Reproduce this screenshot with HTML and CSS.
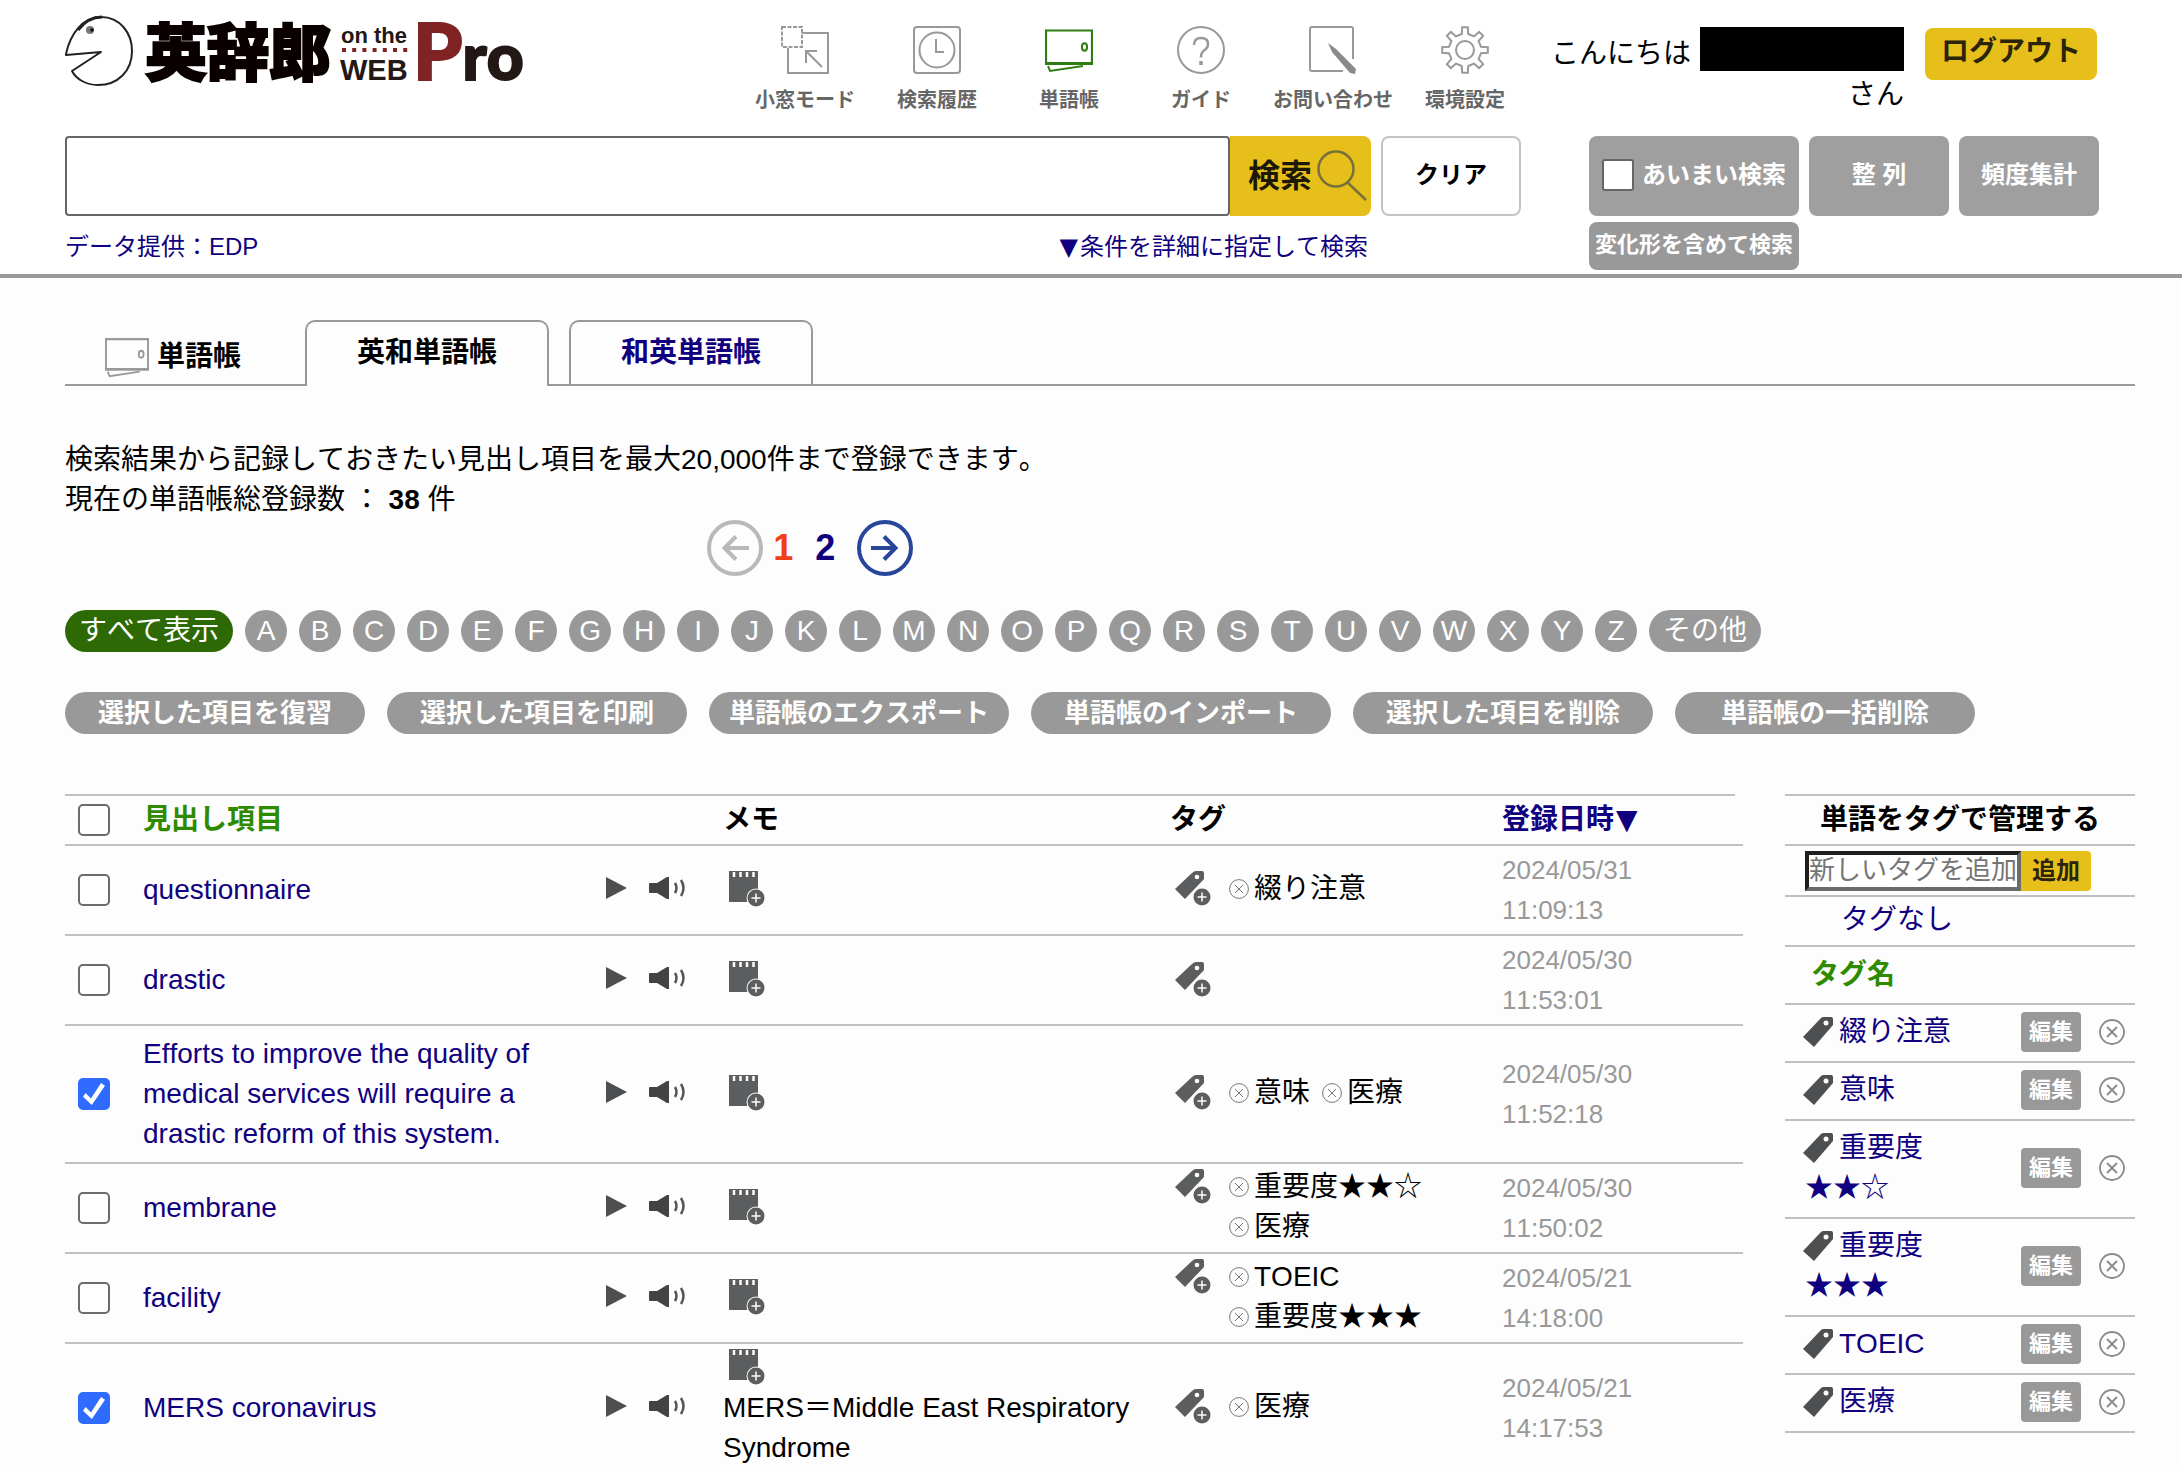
FILE: index.html
```html
<!DOCTYPE html>
<html lang="ja">
<head>
<meta charset="utf-8">
<title>単語帳 - 英辞郎 on the WEB Pro</title>
<link rel="stylesheet" href="styles.css">
</head>
<body>
<svg class="sprite" aria-hidden="true">
  <symbol id="i-play" viewBox="0 0 21 22"><path d="M0 0 21 11 0 22Z" fill="#4d4f50"/></symbol>
  <symbol id="i-sound" viewBox="0 0 36 22">
    <path d="M0 7q0-1 1-1h7L18 0h2v22h-2L8 16H1q-1 0-1-1Z" fill="#434343"/>
    <path d="M26 6q3 5 0 10M32 3q5 8 0 16" fill="none" stroke="#555" stroke-width="2.500"/>
  </symbol>
  <symbol id="i-memo" viewBox="0 0 36 36">
    <path d="M0 0h29v31H0Z" fill="#5b5d5e"/>
    <path d="M5 1v5M11.500 1v5M18 1v5M24.500 1v5" stroke="#fdfdfd" stroke-width="2.500"/>
    <circle cx="27" cy="27" r="9.500" fill="#fdfdfd"/><circle cx="27" cy="27" r="8.500" fill="#5b5d5e"/>
    <path d="M22.500 27h9M27 22.500v9" stroke="#fdfdfd" stroke-width="1.500"/>
  </symbol>
  <symbol id="i-tagadd" viewBox="0 0 36 36">
    <path d="M0 18 17 2q2-2 4-2h6q2 0 2 2v6L10 28Z" fill="#5b5d5e"/>
    <circle cx="22" cy="6" r="2.300" fill="#fdfdfd"/>
    <circle cx="27" cy="26" r="10" fill="#fdfdfd"/><circle cx="27" cy="26" r="8.500" fill="#5b5d5e"/>
    <path d="M22.500 26h9M27 21.500v9" stroke="#fdfdfd" stroke-width="1.500"/>
  </symbol>
  <symbol id="i-tag" viewBox="0 0 30 30">
    <path d="M0 20 18 1q1-1 3-1h7q2 0 2 2v6L11 30Z" fill="#4d4f50"/><circle cx="23" cy="6" r="2.500" fill="#fdfdfd"/>
  </symbol>
  <symbol id="i-x" viewBox="0 0 20 20">
    <circle cx="10" cy="10" r="9.400" fill="none" stroke="#777" stroke-width="1"/>
    <path d="m6 6 8 8M14 6l-8 8" stroke="#777" stroke-width="1"/>
  </symbol>
  <symbol id="i-del" viewBox="0 0 26 26">
    <circle cx="13" cy="13" r="12" fill="none" stroke="#8a8a8a" stroke-width="1.800"/>
    <path d="m8 8 10 10M18 8 8 18" stroke="#8a8a8a" stroke-width="1.800"/>
  </symbol>
  <symbol id="i-wallet" viewBox="0 0 48 48">
    <path d="M1 4.500h46V37H1Z" fill="none" stroke="currentColor" stroke-width="2.200"/>
    <path d="M0 37.500h48" stroke="currentColor" stroke-width="3"/>
    <ellipse cx="39.500" cy="21" rx="2.600" ry="3.800" fill="none" stroke="currentColor" stroke-width="2"/>
    <path d="m3 40 2 5 33-5" fill="none" stroke="currentColor" stroke-width="2"/>
  </symbol>
</svg>

<header class="site-header">
  <div class="header-top">
    <a class="logo" href="#" aria-label="英辞郎 on the WEB Pro">
      <svg width="480" height="106" viewBox="0 -15 480 106">
        <path d="M1 39C5 20 17 2 36 2c19 0 31 16 31 34 0 20-14 34-34 34C21 70 11 64 7 56L36 37 1 40Z" fill="#fff" stroke="#222" stroke-width="2" stroke-linejoin="round"/>
        <path d="M13 15Q23 2 37 2" fill="none" stroke="#222" stroke-width="3"/>
        <circle cx="25" cy="15" r="4" fill="#777"/><circle cx="27" cy="15" r="1.800" fill="#111"/>
        <text class="logo-kanji" x="80" y="61">英辞郎</text>
        <text class="logo-small" x="276" y="28">on the</text>
        <path d="M277 35h66" stroke="#802423" stroke-width="4" stroke-dasharray="4 6.200"/>
        <text class="logo-web" x="275" y="65">WEB</text>
        <text class="logo-p" x="348" y="65">P<tspan class="logo-ro">ro</tspan></text>
      </svg>
    </a>
    <nav class="tools-nav">
      <a href="#"><svg width="48" height="48" viewBox="0 0 48 48" fill="none" stroke="#999" stroke-width="2"><path d="M1 1h20v20H1Z" stroke-dasharray="4 1.500"/><path d="M21 7h26v40H7V22M41 41 25 25M25 37V25h11"/></svg>小窓モード</a>
      <a href="#"><svg width="48" height="48" viewBox="0 0 48 48" fill="none" stroke="#999" stroke-width="2"><rect x="1" y="1" width="46" height="46" rx="3"/><circle cx="24" cy="24" r="17.500"/><path d="M23 13v13h8"/></svg>検索履歴</a>
      <a href="#"><svg class="green" width="48" height="48"><use href="#i-wallet"/></svg>単語帳</a>
      <a href="#"><svg width="48" height="48" viewBox="0 0 48 48" fill="none" stroke="#999" stroke-width="2"><circle cx="24" cy="24" r="23"/><path d="M17 19q0-7 7-7t7 6q0 4-4 6.500-3 2-3 7" stroke-width="2.500"/><path d="M24 35v4" stroke-width="3.500"/></svg>ガイド</a>
      <a href="#"><svg width="48" height="48" viewBox="0 0 48 48" fill="none" stroke="#999" stroke-width="2"><path d="M44 33V3q0-2-2-2H3Q1 1 1 3v40q0 2 2 2h31"/><path d="m19 17 8 6 20 20-1 5-5-1-18-21Z" fill="#8a8a8a" stroke="none"/></svg>お問い合わせ</a>
      <a href="#"><svg width="48" height="48" viewBox="-24 -24 48 48" fill="none" stroke="#999" stroke-width="2"><path d="M-3.200-16-2.800-22.800H2.800L3.200-16 9-13.600 14.100-18.100 18.100-14.100 13.600-9 16-3.200 22.800-2.800V2.800L16 3.200 13.600 9 18.100 14.100 14.100 18.100 9 13.600 3.200 16 2.800 22.800H-2.800L-3.200 16-9 13.600-14.100 18.100-18.100 14.100-13.600 9-16 3.200-22.800 2.800V-2.800L-16-3.200-13.600-9-18.100-14.100-14.100-18.100-9-13.600Z"/><circle r="9"/></svg>環境設定</a>
    </nav>
    <div class="greeting">
      <div class="greeting-line"><span>こんにちは</span><span class="masked-name"></span></div>
      <div>さん</div>
    </div>
    <button class="logout" type="button">ログアウト</button>
  </div>
  <div class="header-search">
    <div class="search-main">
      <form class="search-form">
        <input class="search-input" type="text" aria-label="検索語">
        <button class="search-button" type="button">検索<svg width="52" height="54" viewBox="0 0 52 54" fill="none" stroke="#77703a" stroke-width="2.500"><circle cx="20" cy="20" r="17.500"/><path d="m31 33 19 18"/></svg></button>
      </form>
      <div class="search-links">
        <a href="#">データ提供：EDP</a>
        <a href="#"><span class="tri">▼</span>条件を詳細に指定して検索</a>
      </div>
    </div>
    <button class="clear-button" type="button">クリア</button>
    <div class="search-tools">
      <label class="tool fuzzy"><input type="checkbox" class="fuzzy-check">あいまい検索</label>
      <button class="tool" type="button">整 列</button>
      <button class="tool" type="button">頻度集計</button>
      <button class="tool inflect" type="button">変化形を含めて検索</button>
    </div>
  </div>
</header>

<main class="page">
  <div class="tabs">
    <h1 class="tabs-title"><svg width="44" height="44"><use href="#i-wallet"/></svg>単語帳</h1>
    <a class="tab active" href="#">英和単語帳</a>
    <a class="tab" href="#">和英単語帳</a>
  </div>

  <div class="intro">
    <p>検索結果から記録しておきたい見出し項目を最大20,000件まで登録できます。</p>
    <p>現在の単語帳総登録数 ： <b>38</b> 件</p>
  </div>

  <nav class="pager">
    <svg width="56" height="56" viewBox="0 0 56 56" fill="none" stroke="#b9b9b9" stroke-width="4"><circle cx="28" cy="28" r="26"/><path d="M42 28H18M29 16.500 17.500 28 29 39.500"/></svg>
    <span class="current">1</span>
    <a href="#">2</a>
    <a class="next" href="#" aria-label="次へ"><svg width="56" height="56" viewBox="0 0 56 56" fill="none" stroke="#27459a" stroke-width="4"><circle cx="28" cy="28" r="26"/><path d="M14 28h24M27 16.500 38.500 28 27 39.500"/></svg></a>
  </nav>

  <nav class="letters">
    <a class="wide active" href="#">すべて表示</a>
    <a href="#">A</a><a href="#">B</a><a href="#">C</a><a href="#">D</a><a href="#">E</a><a href="#">F</a><a href="#">G</a><a href="#">H</a><a href="#">I</a><a href="#">J</a><a href="#">K</a><a href="#">L</a><a href="#">M</a><a href="#">N</a><a href="#">O</a><a href="#">P</a><a href="#">Q</a><a href="#">R</a><a href="#">S</a><a href="#">T</a><a href="#">U</a><a href="#">V</a><a href="#">W</a><a href="#">X</a><a href="#">Y</a><a href="#">Z</a>
    <a class="wide" href="#">その他</a>
  </nav>

  <div class="actions">
    <button type="button">選択した項目を復習</button>
    <button type="button">選択した項目を印刷</button>
    <button type="button">単語帳のエクスポート</button>
    <button type="button">単語帳のインポート</button>
    <button type="button">選択した項目を削除</button>
    <button type="button">単語帳の一括削除</button>
  </div>

  <div class="columns">
    <section class="words">
      <table class="word-table">
        <colgroup><col class="c-check"><col class="c-word"><col class="c-audio"><col><col class="c-tags"><col class="c-date"></colgroup>
        <thead>
          <tr>
            <th><input class="check" type="checkbox" aria-label="すべて選択"></th>
            <th class="green-text" colspan="2">見出し項目</th>
            <th>メモ</th>
            <th>タグ</th>
            <th><a href="#">登録日時<span class="tri">▼</span></a></th>
          </tr>
        </thead>
        <tbody>
          <tr>
            <td><input class="check" type="checkbox" aria-label="questionnaire"></td>
            <td class="word"><a href="#">questionnaire</a></td>
            <td><div class="audio"><svg width="21" height="22"><use href="#i-play"/></svg><svg width="36" height="22"><use href="#i-sound"/></svg></div></td>
            <td class="memo"><div class="memo-icon"><svg width="36" height="36"><use href="#i-memo"/></svg></div></td>
            <td class="tags"><div class="tag-cell"><svg width="36" height="36"><use href="#i-tagadd"/></svg><div class="tag-list"><span><svg width="20" height="20"><use href="#i-x"/></svg>綴り注意</span></div></div></td>
            <td class="date">2024/05/31<br>11:09:13</td>
          </tr>
          <tr>
            <td><input class="check" type="checkbox" aria-label="drastic"></td>
            <td class="word"><a href="#">drastic</a></td>
            <td><div class="audio"><svg width="21" height="22"><use href="#i-play"/></svg><svg width="36" height="22"><use href="#i-sound"/></svg></div></td>
            <td class="memo"><div class="memo-icon"><svg width="36" height="36"><use href="#i-memo"/></svg></div></td>
            <td class="tags"><div class="tag-cell"><svg width="36" height="36"><use href="#i-tagadd"/></svg></div></td>
            <td class="date">2024/05/30<br>11:53:01</td>
          </tr>
          <tr>
            <td><input class="check" type="checkbox" checked aria-label="Efforts to improve the quality of medical services"></td>
            <td class="word"><a href="#">Efforts to improve the quality of medical services will require a drastic reform of this system.</a></td>
            <td><div class="audio"><svg width="21" height="22"><use href="#i-play"/></svg><svg width="36" height="22"><use href="#i-sound"/></svg></div></td>
            <td class="memo"><div class="memo-icon"><svg width="36" height="36"><use href="#i-memo"/></svg></div></td>
            <td class="tags"><div class="tag-cell"><svg width="36" height="36"><use href="#i-tagadd"/></svg><div class="tag-list"><span><svg width="20" height="20"><use href="#i-x"/></svg>意味</span><span><svg width="20" height="20"><use href="#i-x"/></svg>医療</span></div></div></td>
            <td class="date">2024/05/30<br>11:52:18</td>
          </tr>
          <tr>
            <td><input class="check" type="checkbox" aria-label="membrane"></td>
            <td class="word"><a href="#">membrane</a></td>
            <td><div class="audio"><svg width="21" height="22"><use href="#i-play"/></svg><svg width="36" height="22"><use href="#i-sound"/></svg></div></td>
            <td class="memo"><div class="memo-icon"><svg width="36" height="36"><use href="#i-memo"/></svg></div></td>
            <td class="tags"><div class="tag-cell"><svg width="36" height="36"><use href="#i-tagadd"/></svg><div class="tag-list"><span><svg width="20" height="20"><use href="#i-x"/></svg>重要度★★☆</span><span><svg width="20" height="20"><use href="#i-x"/></svg>医療</span></div></div></td>
            <td class="date">2024/05/30<br>11:50:02</td>
          </tr>
          <tr>
            <td><input class="check" type="checkbox" aria-label="facility"></td>
            <td class="word"><a href="#">facility</a></td>
            <td><div class="audio"><svg width="21" height="22"><use href="#i-play"/></svg><svg width="36" height="22"><use href="#i-sound"/></svg></div></td>
            <td class="memo"><div class="memo-icon"><svg width="36" height="36"><use href="#i-memo"/></svg></div></td>
            <td class="tags"><div class="tag-cell"><svg width="36" height="36"><use href="#i-tagadd"/></svg><div class="tag-list"><span><svg width="20" height="20"><use href="#i-x"/></svg>TOEIC</span><span><svg width="20" height="20"><use href="#i-x"/></svg>重要度★★★</span></div></div></td>
            <td class="date">2024/05/21<br>14:18:00</td>
          </tr>
          <tr>
            <td><input class="check" type="checkbox" checked aria-label="MERS coronavirus"></td>
            <td class="word"><a href="#">MERS coronavirus</a></td>
            <td><div class="audio"><svg width="21" height="22"><use href="#i-play"/></svg><svg width="36" height="22"><use href="#i-sound"/></svg></div></td>
            <td class="memo"><div class="memo-icon"><svg width="36" height="36"><use href="#i-memo"/></svg></div>MERS＝Middle East Respiratory Syndrome</td>
            <td class="tags"><div class="tag-cell"><svg width="36" height="36"><use href="#i-tagadd"/></svg><div class="tag-list"><span><svg width="20" height="20"><use href="#i-x"/></svg>医療</span></div></div></td>
            <td class="date">2024/05/21<br>14:17:53</td>
          </tr>
        </tbody>
      </table>
    </section>

    <aside class="tag-panel">
      <h2>単語をタグで管理する</h2>
      <form class="tag-form">
        <input type="text" placeholder="新しいタグを追加" aria-label="新しいタグを追加">
        <button type="button">追加</button>
      </form>
      <div class="no-tag"><a href="#">タグなし</a></div>
      <h3>タグ名</h3>
      <ul>
        <li><a href="#"><svg width="30" height="30"><use href="#i-tag"/></svg>綴り注意</a><button class="edit" type="button">編集</button><button class="del" type="button" aria-label="削除"><svg width="26" height="26"><use href="#i-del"/></svg></button></li>
        <li><a href="#"><svg width="30" height="30"><use href="#i-tag"/></svg>意味</a><button class="edit" type="button">編集</button><button class="del" type="button" aria-label="削除"><svg width="26" height="26"><use href="#i-del"/></svg></button></li>
        <li><a href="#"><svg width="30" height="30"><use href="#i-tag"/></svg>重要度★★☆</a><button class="edit" type="button">編集</button><button class="del" type="button" aria-label="削除"><svg width="26" height="26"><use href="#i-del"/></svg></button></li>
        <li><a href="#"><svg width="30" height="30"><use href="#i-tag"/></svg>重要度★★★</a><button class="edit" type="button">編集</button><button class="del" type="button" aria-label="削除"><svg width="26" height="26"><use href="#i-del"/></svg></button></li>
        <li><a href="#"><svg width="30" height="30"><use href="#i-tag"/></svg>TOEIC</a><button class="edit" type="button">編集</button><button class="del" type="button" aria-label="削除"><svg width="26" height="26"><use href="#i-del"/></svg></button></li>
        <li><a href="#"><svg width="30" height="30"><use href="#i-tag"/></svg>医療</a><button class="edit" type="button">編集</button><button class="del" type="button" aria-label="削除"><svg width="26" height="26"><use href="#i-del"/></svg></button></li>
      </ul>
    </aside>
  </div>
</main>
</body>
</html>
```

FILE: styles.css
```css
* { box-sizing: border-box; }

body {
  margin: 0;
  background: #fdfdfd;
  color: #000;
  font-family: "Liberation Sans", "Noto Sans CJK JP", sans-serif;
  font-size: 28px;
  font-kerning: none;
  line-height: 40px;
}

a { color: #100080; text-decoration: none; }
h1, h2, h3, p, ul { margin: 0; padding: 0; }
svg { display: block; flex: none; }
button, input { font-family: inherit; font-kerning: inherit; }
button { border: 0; padding: 0; line-height: 38px; cursor: pointer; }
.sprite { position: absolute; width: 0; height: 0; }
.green { color: #2f7d12; }
.tri { margin: 0 2px; font-family: "DejaVu Sans", sans-serif; }

/* header */
.site-header {
  padding: 0 83px 4px 65px;
  background: #fff;
  border-bottom: 4px solid #999;
}
.header-top { display: flex; align-items: flex-start; min-height: 136px; }
.logo text { font-weight: 900; }
.logo-kanji { font-family: "Noto Sans CJK JP", sans-serif; font-size: 62px; fill: #0a0000; stroke: #0a0000; stroke-width: 2px; }
.logo-small { font-size: 22px; fill: #231815; }
.logo-web { font-size: 29px; fill: #231815; }
.logo-p { font-family: Lato, sans-serif; font-size: 79px; fill: #802423; stroke: #802423; stroke-width: 2px; }
.logo-ro { font-size: 64px; fill: #231815; stroke: #231815; }

.tools-nav { display: flex; margin-left: auto; padding-top: 26px; }
.tools-nav a {
  display: flex;
  flex-direction: column;
  align-items: center;
  gap: 14px;
  width: 132px;
  color: #666;
  font-size: 20px;
  font-weight: bold;
  line-height: 24px;
  white-space: nowrap;
}
.greeting { margin-left: 20px; padding-top: 27px; width: 353px; text-align: right; }
.greeting-line { display: flex; align-items: flex-end; justify-content: space-between; margin-bottom: 4px; line-height: 34px; }
.masked-name { width: 204px; height: 44px; background: #000; }
.logout {
  margin: 28px 2px 0 21px;
  width: 172px;
  height: 52px;
  padding-bottom: 4px;
  border-radius: 8px;
  background: #e6bf1a;
  color: #2b240a;
  font-size: 28px;
  font-weight: bold;
}

.header-search { display: flex; align-items: flex-start; }
.search-main { flex: 1; min-width: 0; }
.search-form { display: flex; }
.search-input {
  flex: 1;
  min-width: 0;
  height: 80px;
  padding: 0 16px;
  border: 2px solid #666;
  border-radius: 4px;
  background: #fff;
  font-size: 32px;
}
.search-button {
  display: flex;
  align-items: center;
  justify-content: flex-end;
  gap: 4px;
  width: 141px;
  padding-right: 3px;
  border-radius: 0 8px 8px 0;
  background: #e6bf1a;
  color: #1c1803;
  font-size: 32px;
  font-weight: bold;
}
.search-links {
  display: flex;
  justify-content: space-between;
  padding: 11px 3px 0 0;
  font-size: 24px;
}
.clear-button {
  width: 140px;
  height: 80px;
  padding-bottom: 2px;
  margin-left: 10px;
  border: 2px solid #c4c4c4;
  border-radius: 8px;
  background: #fff;
  font-size: 24px;
  font-weight: bold;
}
.search-tools {
  display: grid;
  grid-template-columns: 210px 140px 140px;
  grid-template-rows: 80px 48px;
  gap: 6px 10px;
  margin-left: 68px;
}
.tool {
  display: flex;
  align-items: center;
  justify-content: center;
  padding-bottom: 2px;
  border-radius: 8px;
  background: #9f9f9f;
  color: #fff;
  font-size: 24px;
  font-weight: bold;
}
.fuzzy { gap: 8px; }
.fuzzy-check {
  appearance: none;
  width: 32px;
  height: 32px;
  margin: 0;
  border: 2px solid #666;
  border-radius: 3px;
  background: #fff;
}
.inflect { background: #999; font-size: 22px; }

/* tabs */
.page { padding: 42px 47px 0 65px; }
.tabs { display: flex; height: 66px; border-bottom: 2px solid #999; }
.tabs-title {
  display: flex;
  align-items: center;
  gap: 8px;
  width: 240px;
  padding: 10px 0 0 40px;
  font-size: 28px;
  color: #000;
}
.tabs-title svg { color: #999; }
.tab {
  width: 244px;
  margin-right: 20px;
  border: 2px solid #999;
  border-bottom: 0;
  border-radius: 10px 10px 0 0;
  line-height: 62px;
  text-align: center;
  font-weight: bold;
}
.tab.active { margin-bottom: -2px; background: #fdfdfd; color: #000; }

.intro { padding-top: 54px; }

/* paging and filters */
.pager {
  display: flex;
  align-items: center;
  justify-content: center;
  gap: 22px;
  width: 72%;
  font-size: 36px;
  font-weight: bold;
}
.pager .current { margin-left: -12px; color: #f04018; }
.letters { display: flex; flex-wrap: wrap; gap: 12px; margin-top: 34px; }
.letters a {
  width: 42px;
  border-radius: 21px;
  background: #999;
  color: #fff;
  line-height: 42px;
  text-align: center;
}
.letters .wide { width: auto; padding: 0 14px; }
.letters .active { background: #2d6a06; }
.actions { display: flex; flex-wrap: wrap; gap: 22px; margin-top: 40px; }
.actions button {
  width: 300px;
  height: 42px;
  border-radius: 21px;
  background: #999;
  color: #fff;
  font-size: 26px;
  font-weight: bold;
  line-height: 42px;
}

/* word list */
.columns { display: flex; align-items: flex-start; gap: 42px; margin-top: 60px; }
.words { flex: 1; min-width: 0; }
.words::before { content: ""; display: block; height: 2px; margin-right: 8px; background: #c0c0c0; }
.word-table { width: 100%; table-layout: fixed; border-spacing: 0; }
.c-check { width: 78px; }
.c-word { width: 463px; }
.c-audio { width: 117px; }
.c-tags { width: 332px; }
.c-date { width: 241px; }
.word-table th { padding: 4px 0; border-bottom: 2px solid #c0c0c0; text-align: left; }
.word-table td { padding: 4px 0; border-bottom: 2px solid #c0c0c0; vertical-align: middle; }
.green-text { color: #2e8b00; }
.check {
  appearance: none;
  display: block;
  width: 32px;
  height: 32px;
  margin: 0 0 0 13px;
  border: 2px solid #6b6b6b;
  border-radius: 5px;
  background: #fff;
}
.check:checked { border-color: #2f6bff; background: #2f6bff; }
.check:checked::before {
  content: "";
  display: block;
  width: 22px;
  height: 22px;
  margin: 3px;
  background: #fff;
  clip-path: polygon(0 62%, 12% 46%, 36% 70%, 82% 0, 100% 12%, 40% 100%);
}
.word-table .word { padding: 8px 40px 8px 0; }
.audio { display: flex; align-items: center; gap: 22px; padding-bottom: 4px; }
.memo-icon { height: 40px; padding: 1px 0 0 6px; }
.word-table .tags { padding: 3px 0 5px 5px; }
.tag-cell { display: flex; align-items: flex-start; gap: 18px; }
.tag-cell > svg { margin-top: 2px; }
.tag-list { display: flex; flex-wrap: wrap; gap: 0 12px; width: 261px; }
.tag-list span { display: flex; align-items: center; gap: 5px; }
.date { color: #999; font-size: 26px; }

/* tag panel */
.tag-panel { width: 350px; border-top: 2px solid #c0c0c0; }
.tag-panel > *, .tag-panel li { border-bottom: 2px solid #c0c0c0; }
.tag-panel ul { border: 0; list-style: none; }
.tag-panel h2 { padding: 4px 0; font-size: 28px; text-align: center; }
.tag-form { display: flex; padding: 5px 20px 4px; }
.tag-form input {
  width: 216px;
  height: 40px;
  padding: 0 0 2px;
  border: 4px solid;
  border-color: #1e1e1e #6b6b6b #6b6b6b #1e1e1e;
  border-radius: 0;
  background: #fff;
  font-size: 26px;
}
.tag-form input::placeholder { color: #757575; opacity: 1; }
.tag-form button {
  width: 70px;
  border-radius: 0 4px 4px 0;
  background: #e6bf1a;
  color: #2b240a;
  font-size: 24px;
  font-weight: bold;
}
.no-tag { padding: 3px 0 5px 56px; }
.tag-panel h3 { padding: 8px 0 8px 26px; font-size: 28px; color: #2e8b00; }
.tag-panel li { display: flex; align-items: center; padding: 7px 10px 9px 20px; }
.tag-panel li a { width: 180px; }
.tag-panel li svg { display: inline-block; vertical-align: middle; }
.tag-panel li a svg { margin: -4px 6px 0 -2px; }
.edit {
  width: 60px;
  height: 40px;
  margin-left: auto;
  border-radius: 4px;
  background: #999;
  color: #fff;
  font-size: 22px;
  font-weight: bold;
}
.del { width: 26px; height: 26px; margin-left: 18px; background: none; line-height: 0; }
```
